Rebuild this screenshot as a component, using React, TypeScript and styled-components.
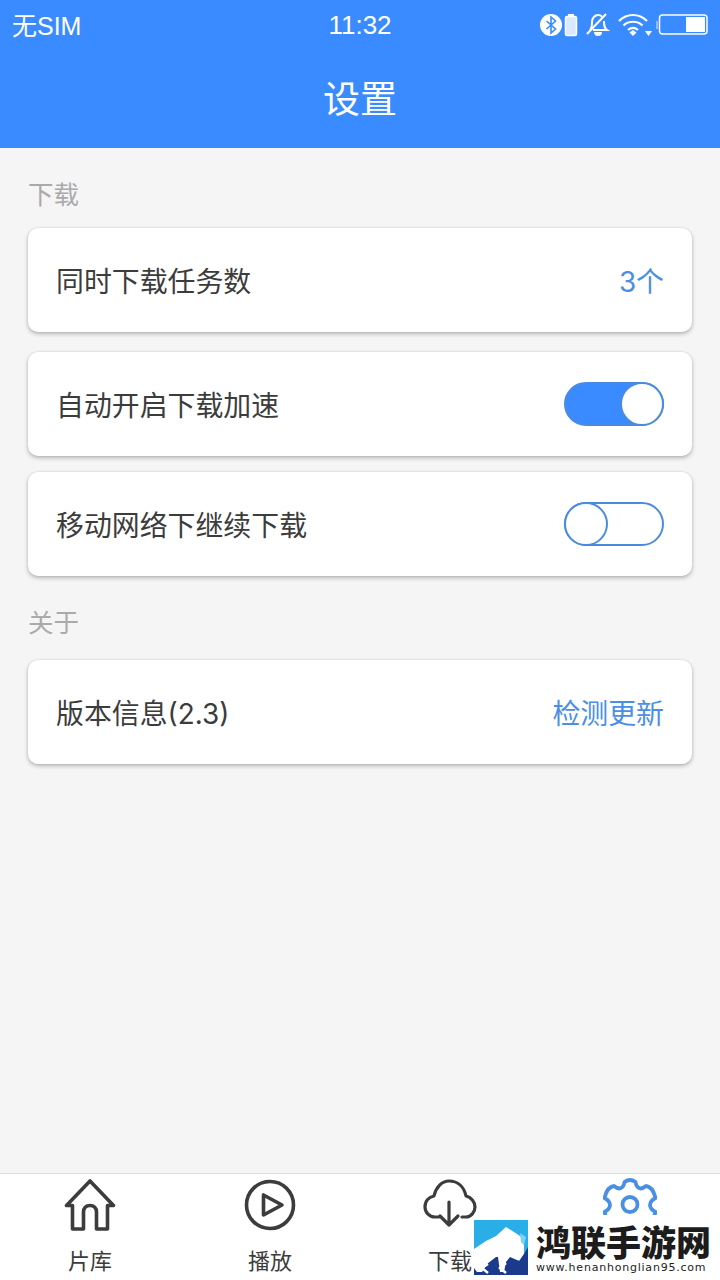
import React from 'react';
import styled, { createGlobalStyle } from 'styled-components';

const GlobalStyle = createGlobalStyle`
  html, body {
    margin: 0;
    padding: 0;
    background: #f5f5f5;
  }
  * {
    box-sizing: border-box;
  }
`;

const FONT = `"Liberation Sans", "Noto Sans CJK SC", sans-serif`;
const ROW_FONT = `Inter, "Noto Sans CJK SC", sans-serif`;

const Page = styled.div`
  position: relative;
  width: 720px;
  height: 1280px;
  display: flex;
  flex-direction: column;
  overflow: hidden;
  background: #f5f5f5;
  font-family: ${FONT};
`;

const Header = styled.header`
  height: 148px;
  flex: none;
  background: #3a8bff;
  color: #fff;
  display: flex;
  flex-direction: column;
`;

const StatusBar = styled.div`
  height: 50px;
  padding: 0 12px;
  display: grid;
  grid-template-columns: 1fr auto 1fr;
  align-items: center;
`;

const Carrier = styled.span`
  font-size: 25px;
  margin-top: -3px;
`;

const Clock = styled.span`
  font-size: 26px;
`;

const StatusIcons = styled.div`
  display: flex;
  justify-content: flex-end;
  align-items: center;
`;

const NavTitle = styled.h1`
  margin: 0;
  flex: 1;
  display: flex;
  align-items: center;
  justify-content: center;
  padding-bottom: 4px;
  font-size: 37px;
  font-weight: 400;
`;

const Content = styled.main`
  flex: 1;
  padding: 29px 28px 0;
  display: flex;
  flex-direction: column;
`;

const SectionLabel = styled.div<{ $top?: number; $bottom: number }>`
  height: 36px;
  margin-top: ${(p) => p.$top ?? 0}px;
  margin-bottom: ${(p) => p.$bottom}px;
  line-height: 36px;
  font-size: 25.5px;
  color: #aaaaaa;
`;

const Card = styled.div<{ $gap?: number }>`
  height: 104px;
  margin-bottom: ${(p) => p.$gap ?? 0}px;
  padding: 0 28px;
  display: flex;
  align-items: center;
  justify-content: space-between;
  background: #fff;
  border-radius: 10px;
  box-shadow: 0 2px 4px rgba(0, 0, 0, 0.26), 0 0 2px rgba(0, 0, 0, 0.12);
`;

const RowTitle = styled.span`
  font-family: ${ROW_FONT};
  font-size: 27.9px;
  color: #3c3c3c;
`;

const RowValue = styled.span`
  font-family: ${ROW_FONT};
  font-size: 27.9px;
  color: #4a8fe4;
`;

const Toggle = styled.div<{ $on: boolean }>`
  position: relative;
  width: 100px;
  height: 44px;
  border-radius: 22px;
  border: 2px solid #4a8be0;
  background: ${(p) => (p.$on ? '#3a8bff' : '#fff')};
`;

const Knob = styled.div<{ $on: boolean }>`
  position: absolute;
  top: -2px;
  left: ${(p) => (p.$on ? '54px' : '-2px')};
  width: 44px;
  height: 44px;
  border-radius: 50%;
  background: #fff;
  border: 2px solid #4a8be0;
`;

const TabBar = styled.nav`
  height: 107px;
  flex: none;
  display: grid;
  grid-template-columns: repeat(4, 1fr);
  background: #fff;
  border-top: 1px solid #dcdcdc;
`;

const TabItem = styled.div<{ $active?: boolean }>`
  display: flex;
  flex-direction: column;
  align-items: center;
  padding-top: 4px;
  color: ${(p) => (p.$active ? '#4a8fe4' : '#3c3c3c')};
`;

const TabLabel = styled.span`
  margin-top: 14px;
  font-size: 22px;
  line-height: 32px;
`;

const Watermark = styled.div`
  position: absolute;
  left: 474px;
  top: 1215px;
  width: 246px;
  height: 65px;
  display: flex;
  align-items: flex-end;
  padding-bottom: 5px;
  gap: 8px;
  background: #fff;
`;

const BrandText = styled.div`
  display: flex;
  flex-direction: column;
  align-items: flex-start;
`;

const BrandName = styled.span`
  font-family: "Noto Sans CJK SC", sans-serif;
  font-weight: 900;
  font-size: 35px;
  line-height: 40px;
  color: #1c1c1c;
`;

const BrandUrl = styled.span`
  font-family: "DejaVu Sans", sans-serif;
  font-size: 11px;
  line-height: 14px;
  letter-spacing: 0.78px;
  color: #222;
`;

const StatusIconSet = () => (
  <>
    <svg width="24" height="24" viewBox="0 0 24 24">
      <ellipse cx="11" cy="12" rx="11" ry="11" fill="#fff" />
      <path d="M6.500 8l9 8-4.500 4V4l4.500 4-9 8" fill="none" stroke="#3a8bff" strokeWidth="1.600" />
    </svg>
    <svg width="14" height="24" viewBox="0 0 14 24" style={{ marginRight: 8 }}>
      <rect x="4" y="1" width="6" height="3" fill="#fff" />
      <rect x="1.500" y="3.500" width="11" height="19" rx="1.500" fill="#dbe9ff" stroke="#fff" strokeWidth="1.500" />
    </svg>
    <svg width="24" height="26" viewBox="0 0 24 26" style={{ marginRight: 8 }}>
      <path d="M4 18c2-2 2-4 2-8 0-4 3-7 6-7 1.600 0 3 .6 4 1.600M18 9c0 4 0 7 3 9H7" fill="none" stroke="#fff" strokeWidth="2" />
      <path d="M1 22L20 2" stroke="#fff" strokeWidth="2" />
      <path d="M8 20h8c0 3-2 4-4 4s-4-1-4-4z" fill="#fff" />
    </svg>
    <svg width="34" height="24" viewBox="0 0 34 24" style={{ marginRight: 4 }}>
      <path d="M1 8c8-8 20-8 28 0M5.500 12.500c5-5 14-5 19 0M10 17c3-2.500 7-2.500 10 0" fill="none" stroke="#fff" strokeWidth="2.200" />
      <path d="M11.500 19.500l3.500-2.500 3.500 2.500-3.500 3.500z" fill="#fff" />
      <path d="M27 18h7l-3.500 5z" fill="#fff" />
    </svg>
    <svg width="52" height="22" viewBox="0 0 52 22">
      <rect x="0" y="7" width="2" height="8" fill="#8fbcff" />
      <rect x="3.500" y="1" width="47.500" height="19" rx="3" fill="none" stroke="#fff" strokeWidth="1.500" />
      <rect x="30" y="3" width="19" height="15" fill="#fff" />
    </svg>
  </>
);

const HomeIcon = () => (
  <svg width="52" height="54" viewBox="0 0 52 54" fill="none" stroke="currentColor" strokeWidth="3.600" strokeLinejoin="round" strokeLinecap="round">
    <path d="M26 3L2.500 27.500H8.500V51H19.500V34C19.500 30 22 27.500 26 27.500S32.500 30 32.500 34V51H43.500V27.500H49.500Z" />
  </svg>
);

const PlayIcon = () => (
  <svg width="52" height="54" viewBox="0 0 52 54" fill="none" stroke="currentColor" strokeWidth="3.600" strokeLinejoin="round">
    <circle cx="26" cy="27" r="23.500" />
    <path d="M19.500 17V37L38 27Z" />
  </svg>
);

const CloudDownloadIcon = () => (
  <svg width="54" height="54" viewBox="0 0 54 54" fill="none" stroke="currentColor" strokeWidth="3.200" strokeLinecap="round" strokeLinejoin="round">
    <path d="M16 39H12C6 39 2 34 2 29C2 23 6 19 11 18C13 9 19 3 26 3C35 3 41 9 43 18C48 19 52 24 52 29C52 34 48 39 43 39H39" />
    <path d="M26 24V47M17 38L26 47L35 38" />
  </svg>
);

const GearIcon = () => (
  <svg width="54" height="54" viewBox="0 0 54 54" fill="none" stroke="currentColor" strokeWidth="3.800" strokeLinejoin="round">
    <path d="M21.500 4Q27 0 32.500 4Q33.500 10 37.500 10.500Q40 10.500 43 8Q50 9 52.500 20Q47 23 47 27Q47 31 52.500 34Q50 45 43 46Q40 43.500 37.500 43.500Q33.500 44 32.500 50Q27 54 21.500 50Q20.500 44 16.500 43.500Q14 43.500 11 46Q4 45 1.500 34Q7 31 7 27Q7 23 1.500 20Q4 9 11 8Q14 10.500 16.500 10.500Q20.500 10 21.500 4Z" />
    <circle cx="27" cy="26.500" r="7.500" />
  </svg>
);

const BisonLogo = () => (
  <svg width="54" height="55" viewBox="0 0 54 55">
    <rect width="54" height="55" fill="#29aee8" />
    <path d="M0 29L12 21L22 16L32 7L40 12L46 16L50 22L50 34L46 41L36 38H0Z" fill="#fff" />
    <path d="M0 37H36L45 41L50 34L54 27V55H0Z" fill="#1b3a8c" />
    <path d="M0 37H22L13 44L8 52L3 52L0 48ZM24 37H36L32 42L30 52L26 52Z" fill="#fff" />
    <path d="M46 13L52 17L50 25L47 22Z" fill="#7fd0f2" />
    <path d="M14 44L8 48L14 53M32 43L26 48L32 53" fill="none" stroke="#fff" strokeWidth="2.500" />
  </svg>
);

const App: React.FC = () => (
  <Page>
    <GlobalStyle />
    <Header>
      <StatusBar>
        <Carrier>无SIM</Carrier>
        <Clock>11:32</Clock>
        <StatusIcons>
          <StatusIconSet />
        </StatusIcons>
      </StatusBar>
      <NavTitle>设置</NavTitle>
    </Header>

    <Content>
      <SectionLabel $bottom={15}>下载</SectionLabel>
      <Card $gap={20}>
        <RowTitle>同时下载任务数</RowTitle>
        <RowValue>3个</RowValue>
      </Card>
      <Card $gap={16}>
        <RowTitle>自动开启下载加速</RowTitle>
        <Toggle $on>
          <Knob $on />
        </Toggle>
      </Card>
      <Card>
        <RowTitle>移动网络下继续下载</RowTitle>
        <Toggle $on={false}>
          <Knob $on={false} />
        </Toggle>
      </Card>
      <SectionLabel $top={29} $bottom={19}>关于</SectionLabel>
      <Card>
        <RowTitle>版本信息(2.3)</RowTitle>
        <RowValue>检测更新</RowValue>
      </Card>
    </Content>

    <TabBar>
      <TabItem>
        <HomeIcon />
        <TabLabel>片库</TabLabel>
      </TabItem>
      <TabItem>
        <PlayIcon />
        <TabLabel>播放</TabLabel>
      </TabItem>
      <TabItem>
        <CloudDownloadIcon />
        <TabLabel>下载</TabLabel>
      </TabItem>
      <TabItem $active>
        <GearIcon />
      </TabItem>
    </TabBar>

    <Watermark>
      <BisonLogo />
      <BrandText>
        <BrandName>鸿联手游网</BrandName>
        <BrandUrl>www.henanhonglian95.com</BrandUrl>
      </BrandText>
    </Watermark>
  </Page>
);

export default App;
